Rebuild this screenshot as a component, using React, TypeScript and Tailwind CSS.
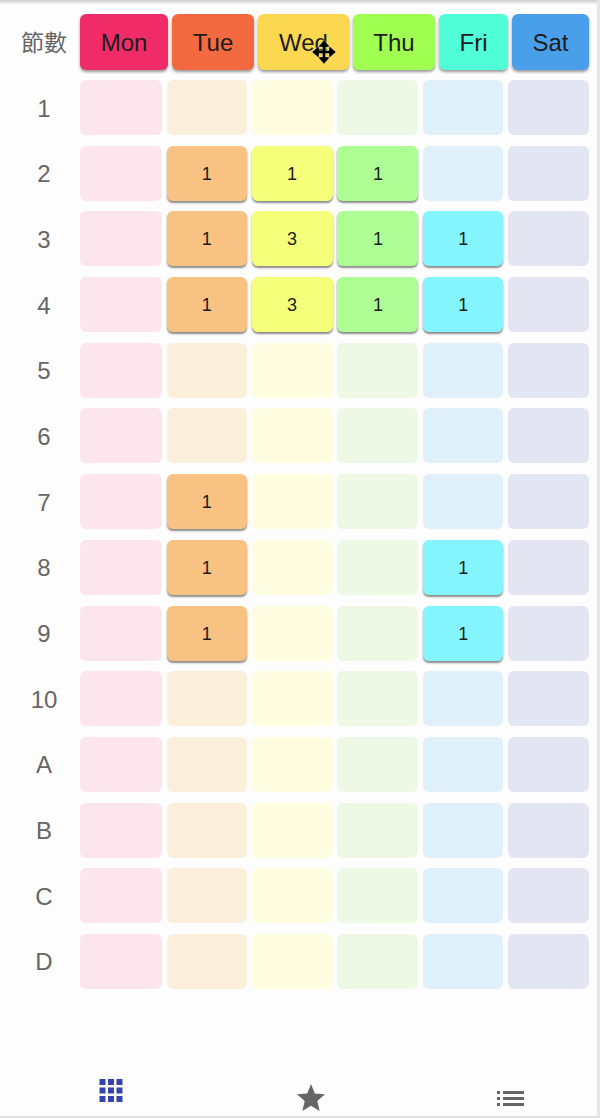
const sans = "font-['Liberation_Sans','Noto_Sans_CJK_TC',sans-serif]";

const DAYS = [
  { label: "Mon", width: "w-[88px]", color: "bg-[#f02c68]" },
  { label: "Tue", width: "w-[82px]", color: "bg-[#f46a40]" },
  { label: "Wed", width: "w-[91px]", color: "bg-[#fbd84f]" },
  { label: "Thu", width: "w-[82px]", color: "bg-[#a0ff50]" },
  { label: "Fri", width: "w-[69px]", color: "bg-[#50ffd8]" },
  { label: "Sat", width: "w-[77px]", color: "bg-[#4a9fea]" },
];

const PALE = ["bg-[#fce5ec]", "bg-[#fbeedb]", "bg-[#fefde0]", "bg-[#edf8e5]", "bg-[#dff0fa]", "bg-[#e3e6f2]"];
const ACTIVE = ["bg-[#f8a0b8]", "bg-[#f8c283]", "bg-[#f6ff7a]", "bg-[#adff95]", "bg-[#84f5ff]", "bg-[#b0b8e0]"];

const ROWS: { label: string; counts: number[] }[] = [
  { label: "1", counts: [0, 0, 0, 0, 0, 0] },
  { label: "2", counts: [0, 1, 1, 1, 0, 0] },
  { label: "3", counts: [0, 1, 3, 1, 1, 0] },
  { label: "4", counts: [0, 1, 3, 1, 1, 0] },
  { label: "5", counts: [0, 0, 0, 0, 0, 0] },
  { label: "6", counts: [0, 0, 0, 0, 0, 0] },
  { label: "7", counts: [0, 1, 0, 0, 0, 0] },
  { label: "8", counts: [0, 1, 0, 0, 1, 0] },
  { label: "9", counts: [0, 1, 0, 0, 1, 0] },
  { label: "10", counts: [0, 0, 0, 0, 0, 0] },
  { label: "A", counts: [0, 0, 0, 0, 0, 0] },
  { label: "B", counts: [0, 0, 0, 0, 0, 0] },
  { label: "C", counts: [0, 0, 0, 0, 0, 0] },
  { label: "D", counts: [0, 0, 0, 0, 0, 0] },
];

function MoveCursor() {
  return (
    <svg className="absolute left-[312px] top-[40px]" width="24" height="24" viewBox="0 0 24 24">
      <path
        d="M12 0L18 7H13.500V10.500H17V6L24 12L17 18V13.500H13.500V17H18L12 24L6 17H10.500V13.500H7V18L0 12L7 6V10.500H10.500V7H6Z"
        fill="#000"
        stroke="#fff"
        strokeOpacity="0.5"
        strokeWidth="0.6"
      />
    </svg>
  );
}

function GridIcon() {
  return (
    <svg width="24" height="24" viewBox="0 0 24 24" fill="#3444a8">
      <rect x="0.500" y="0" width="6" height="6" />
      <rect x="9" y="0" width="6" height="6" />
      <rect x="17.500" y="0" width="6" height="6" />
      <rect x="0.500" y="8.500" width="6" height="6" />
      <rect x="9" y="8.500" width="6" height="6" />
      <rect x="17.500" y="8.500" width="6" height="6" />
      <rect x="0.500" y="17" width="6" height="6" />
      <rect x="9" y="17" width="6" height="6" />
      <rect x="17.500" y="17" width="6" height="6" />
    </svg>
  );
}

function StarIcon() {
  return (
    <svg width="28" height="27" viewBox="0 0 24 23" fill="#666">
      <path d="M12 18.500l-7.400 4.500 2-8.500L0 8.800l8.700-.8L12 0l3.300 8 8.700.8-6.600 5.700 2 8.500z" />
    </svg>
  );
}

function ListIcon() {
  return (
    <svg width="27" height="15" viewBox="0 0 27 15" fill="#666">
      <rect x="0" y="0" width="3" height="3" />
      <rect x="0" y="6" width="3" height="3" />
      <rect x="0" y="12" width="3" height="3" />
      <rect x="6" y="0" width="21" height="3" />
      <rect x="6" y="6" width="21" height="3" />
      <rect x="6" y="12" width="21" height="3" />
    </svg>
  );
}

export default function App() {
  return (
    <div className={`relative flex flex-col h-[1118px] w-[600px] overflow-hidden bg-[#fdfdfe] ${sans}`}>
      {/* top shadow */}
      <div className="h-[5px] shrink-0 bg-gradient-to-b from-[#cfcfcf] to-[#fdfdfe]" />

      {/* header */}
      <div className="flex items-center h-[56px] mt-[9px] shrink-0">
        <div className="w-[88px] pt-[2px] text-center text-[23px] leading-none text-[#666]">節數</div>
        <div className="flex gap-[4px] -ml-[8px]">
          {DAYS.map((d) => (
            <div
              key={d.label}
              className={`${d.width} ${d.color} h-[56px] pt-[2px] rounded-[6px] flex items-center justify-center text-[24px] text-[#1c1c1c] shadow-[0_2px_3px_rgba(0,0,0,0.4)]`}
            >
              {d.label}
            </div>
          ))}
        </div>
      </div>

      {/* rows */}
      <div className="flex flex-col gap-[10.7px] mt-[10px]">
        {ROWS.map((row) => (
          <div key={row.label} className="flex items-center h-[55px]">
            <div className="w-[80px] pl-[8px] pt-[2px] text-center text-[24px] text-[#666]">{row.label}</div>
            <div className="grid grid-cols-[82px_80px_81px_81px_80px_81px] gap-x-[4.800px] w-[509px] h-full">
              {row.counts.map((n, i) =>
                n > 0 ? (
                  <div
                    key={i}
                    className={`${ACTIVE[i]} pt-[2px] rounded-[6px] flex items-center justify-center text-[18px] text-[#1c1c1c] shadow-[0_2px_2px_rgba(0,0,0,0.45)]`}
                  >
                    {n}
                  </div>
                ) : (
                  <div key={i} className={`${PALE[i]} rounded-[6px]`} />
                ),
              )}
            </div>
          </div>
        ))}
      </div>

      {/* bottom nav */}
      <div className="mt-auto h-[48px] flex items-start pl-[98.5px]">
        <div className="mt-[9px]">
          <GridIcon />
        </div>
        <div className="ml-[174.5px] mt-[14px]">
          <StarIcon />
        </div>
        <div className="ml-[172px] mt-[21px]">
          <ListIcon />
        </div>
      </div>

      {/* window edges */}
      <div className="absolute right-0 top-0 bottom-0 w-[3px] bg-[#e6e6e6]" />
      <div className="absolute left-0 right-0 bottom-0 h-[2px] bg-[#e0e0e0]" />

      <MoveCursor />
    </div>
  );
}
